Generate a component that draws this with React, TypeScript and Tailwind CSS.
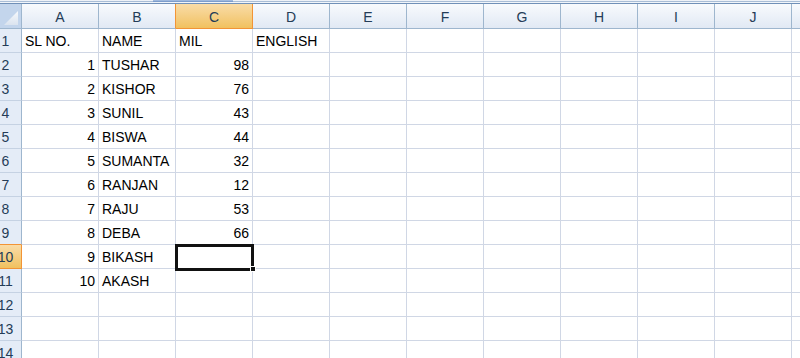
import React from 'react';

const COLS = ['A', 'B', 'C', 'D', 'E', 'F', 'G', 'H', 'I', 'J', 'K'];

type Cell = string | number | null;

const DATA: Cell[][] = [
  ['SL NO.', 'NAME', 'MIL', 'ENGLISH'],
  [1, 'TUSHAR', 98],
  [2, 'KISHOR', 76],
  [3, 'SUNIL', 43],
  [4, 'BISWA', 44],
  [5, 'SUMANTA', 32],
  [6, 'RANJAN', 12],
  [7, 'RAJU', 53],
  [8, 'DEBA', 66],
  [9, 'BIKASH', null],
  [10, 'AKASH', null],
  [],
  [],
  [],
];

const SEL_ROW = 10;
const SEL_COL = 2;

const TopStrip: React.FC = () => (
  <div className="h-[4px] flex flex-col">
    <div className="h-[1px] bg-[#eef2f8] flex">
      <div className="w-[153px]" />
      <div className="w-[80px] bg-[#9fb9de]" />
    </div>
    <div className="h-[1px] bg-[#a9bdd6] flex">
      <div className="w-[153px]" />
      <div className="w-[80px] bg-[#7d9dcc]" />
    </div>
    <div className="h-[1px] bg-[#f1f5fa]" />
    <div className="h-[1px] bg-[#7090b8]" />
  </div>
);

const HeaderRow: React.FC = () => (
  <div className="flex h-[25px]">
    <div className="w-[22px] shrink-0 border-r border-b border-[#9eb6ce] bg-[#c3d5ec] relative overflow-hidden">
      <div
        className="absolute right-[3px] bottom-[3px] w-[14px] h-[14px] bg-gradient-to-b from-[#f7f9fc] to-[#dbe4ef]"
        style={{ clipPath: 'polygon(100% 0, 100% 100%, 0 100%)' }}
      />
    </div>
    {COLS.map((c, i) => {
      const sel = i === SEL_COL;
      const beforeSel = i === SEL_COL - 1;
      return (
        <div
          key={c}
          className={`w-[77px] shrink-0 flex items-center justify-center border-r border-b ${
            sel
              ? 'bg-gradient-to-b from-[#f9dca7] to-[#f1c15e] border-[#f29436]'
              : `bg-gradient-to-b from-[#f8fafd] to-[#e1e9f4] border-b-[#9eb6ce] ${
                  beforeSel ? 'border-r-[#f29436]' : 'border-r-[#9eb6ce]'
                }`
          }`}
        >
          <span className="text-[14px] text-[#243c57] leading-none pt-[2px]">{c}</span>
        </div>
      );
    })}
  </div>
);

const DataRow: React.FC<{ n: number; cells: Cell[] }> = ({ n, cells }) => {
  const selRow = n === SEL_ROW;
  const beforeSel = n === SEL_ROW - 1;
  return (
    <div className="flex h-[24px]">
      <div
        className={`w-[22px] shrink-0 border-r flex items-center overflow-hidden ${
          selRow
            ? 'bg-gradient-to-b from-[#f9dca7] to-[#f1c15e] border-[#f29436] border-b'
            : `bg-[#e4ecf7] border-r-[#9eb6ce] border-b ${beforeSel ? 'border-b-[#f29436]' : 'border-b-[#c5d2e3]'}`
        }`}
      >
        <span className="w-[13px] shrink-0 -ml-[1px] flex justify-center pt-[1px]">
          <span className="text-[14px] text-[#243c57] whitespace-nowrap">{n}</span>
        </span>
      </div>
      {COLS.map((c, i) => {
        const v = cells[i];
        const isNum = typeof v === 'number';
        const isSel = selRow && i === SEL_COL;
        return (
          <div
            key={c}
            className={`w-[77px] shrink-0 border-r border-b border-[#d0d7e5] flex items-center px-[3px] pt-[1px] ${
              isNum ? 'justify-end' : 'justify-start'
            } ${isSel ? 'relative z-10' : 'overflow-hidden'}`}
          >
            {v !== null && v !== undefined && (
              <span className="text-[14px] text-black whitespace-nowrap">{v}</span>
            )}
            {isSel && (
              <>
                <div className="absolute -left-[1px] -top-[1px] w-[79px] h-[27px] border-[3px] border-[#111]" />
                <div className="absolute -right-[4px] -bottom-[4px] w-[6px] h-[6px] bg-[#111] border border-white" />
              </>
            )}
          </div>
        );
      })}
    </div>
  );
};

export default function App() {
  return (
    <div
      className="w-[800px] h-[358px] overflow-hidden bg-white"
      style={{ fontFamily: '"Liberation Sans", Arial, sans-serif' }}
    >
      <TopStrip />
      <HeaderRow />
      {DATA.map((cells, idx) => (
        <DataRow key={idx} n={idx + 1} cells={cells} />
      ))}
    </div>
  );
}
